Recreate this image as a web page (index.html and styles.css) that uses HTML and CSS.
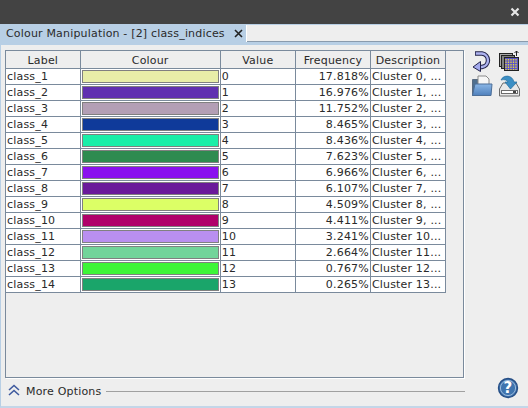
FILE: index.html
```html
<!DOCTYPE html>
<html lang="en">
<head>
    <meta charset="UTF-8">
    <title>Colour Manipulation</title>
    <link rel="stylesheet" href="styles.css">
</head>
<body>

<div class="titlebar">
    <svg class="close-icon" width="10" height="10" viewBox="0 0 10 10"><path d="M1.5 1.5 L8.5 8.5 M8.5 1.5 L1.5 8.5" stroke="#e6e6e6" stroke-width="2.2"/></svg>
</div>

<div class="dialog">
    <div class="tabstrip">
        <div class="tab">
            <span class="tab-title">Colour Manipulation - [2] class_indices</span>
            <svg width="9" height="9" viewBox="0 0 9 9"><path d="M1 1 L8 8 M8 1 L1 8" stroke="#222" stroke-width="1.6"/></svg>
        </div>
    </div>

    <div class="main">
        <div class="table-panel">
            <table class="colour-table">
                <colgroup>
                    <col class="col-label"><col class="col-colour"><col class="col-value"><col class="col-freq"><col class="col-desc">
                </colgroup>
                <thead>
                    <tr><th>Label</th><th>Colour</th><th>Value</th><th>Frequency</th><th>Description</th></tr>
                </thead>
                <tbody id="rows"></tbody>
            </table>
        </div>

        <div class="side-tools">
            <svg width="22" height="22" viewBox="0 0 22 22">
                <path d="M4 3.5 H11 A6.8 6.8 0 0 1 11 17 H9" fill="none" stroke="#23234a" stroke-width="4.4"/>
                <path d="M4.8 3.5 H11 A6.8 6.8 0 0 1 11 17 H9" fill="none" stroke="#aeb3f0" stroke-width="2.4"/>
                <path d="M9.5 11.5 L2 17 L9.5 21.5 Z" fill="#a4aaee" stroke="#23234a"/>
            </svg>
            <svg width="22" height="22" viewBox="0 0 22 22">
                <rect x="1.5" y="3.5" width="13" height="13" fill="#a8a8a8" stroke="#222"/>
                <rect x="3.5" y="5.5" width="13" height="13" fill="#808080" stroke="#222"/>
                <rect x="6.5" y="7.5" width="14" height="13" fill="#5b55c8" stroke="#222"/>
                <path d="M8 9 V20 M10.5 9 V20 M13 9 V20 M15.500 9 V20 M18 9 V20" stroke="#e6d83c" stroke-width="1.3" stroke-dasharray="1.500 1"/>
                <path d="M18.500 6 V1 M16.500 3 L18.500 1 L20.500 3" fill="none" stroke="#222"/>
            </svg>
            <svg width="22" height="22" viewBox="0 0 22 22">
                <defs>
                    <linearGradient id="folderFront" x1="0" y1="0" x2="0" y2="1">
                        <stop offset="0" stop-color="#8ab6e6"/>
                        <stop offset="1" stop-color="#4f80bc"/>
                    </linearGradient>
                </defs>
                <path d="M1.500 4.500 H7 V20.500 H1.500 Z" fill="#50708f" stroke="#5a6c82"/>
                <path d="M7 1 H15 L18 4 V10 H7 Z" fill="#f6f6f6" stroke="#8a8a8a"/>
                <path d="M4 9 H21 L20 20.500 H1.500 Z" fill="url(#folderFront)" stroke="#4d6f98"/>
            </svg>
            <svg width="23" height="22" viewBox="0 0 23 22">
                <path d="M5 8 L1.500 14 V21 H21.500 V14 L18 8 Z" fill="#e8e8e8" stroke="#6d6d6d"/>
                <rect x="3.500" y="15.500" width="16" height="3" fill="#fff" stroke="#6d6d6d"/>
                <rect x="15" y="16" width="3" height="2" fill="#444"/>
                <path d="M3 5 C5 0 14 -1 16 7 H19 L12.500 14 L7 7 H10 C9.500 5 6 4 3 5 Z" fill="#3c8fc4" stroke="#1f6a9c" stroke-width="0.7"/>
            </svg>
        </div>
    </div>

    <div class="footer">
        <svg class="more-icon" width="14" height="12" viewBox="0 0 14 12"><path d="M2 6 L7 1.5 L12 6 M2 11 L7 6.5 L12 11" fill="none" stroke="#3f5a9e" stroke-width="1.6"/></svg>
        <span class="more-label">More Options</span>
        <div class="footer-rule"></div>
        <svg class="help-icon" width="22" height="22" viewBox="0 0 22 22">
            <circle cx="11" cy="11" r="9.5" fill="#3f74ae" stroke="#274f86" stroke-width="1.4"/>
            <circle cx="11" cy="11" r="7.6" fill="none" stroke="#9dbbdc" stroke-width="1"/>
            <text x="11" y="16" class="help-mark">?</text>
        </svg>
    </div>
</div>

<script>
    const colours = ['#e8eea8', '#6030b0', '#b39fb5', '#0f3a9a', '#1aeea8', '#2e8b50', '#8a10ee',
        '#6a1a9a', '#dcff66', '#b0006a', '#b98ff0', '#72d49a', '#3df538', '#1aa56a'];
    const freqs = ['17.818', '16.976', '11.752', '8.465', '8.436', '7.623', '6.966',
        '6.107', '4.509', '4.411', '3.241', '2.664', '0.767', '0.265'];

    let html = '';
    colours.forEach(function (colour, i) {
        const desc = i < 10 ? 'Cluster ' + i + ', ...' : 'Cluster ' + i + '...';
        html += '<tr><td>class_' + (i + 1) + '</td>'
            + '<td class="swatch-cell"><div class="swatch" style="background:' + colour + '"></div></td>'
            + '<td>' + i + '</td>'
            + '<td class="num">' + freqs[i] + '%</td>'
            + '<td>' + desc + '</td></tr>';
    });
    document.getElementById('rows').innerHTML = html;
</script>

</body>
</html>
```

FILE: styles.css
```css
html, body {
    margin: 0;
    height: 100%;
}
body {
    width: 528px;
    height: 408px;
    overflow: hidden;
    display: flex;
    flex-direction: column;
    font-family: "DejaVu Sans", sans-serif;
    font-size: 11px;
    letter-spacing: 0.18px;
    color: #2a2a2a;
    background: #eeeeee;
}
.titlebar {
    height: 24px;
    flex: none;
    display: flex;
    justify-content: flex-end;
    align-items: center;
    padding-right: 8px;
    background: #434343;
}
.dialog {
    flex: 1;
    display: flex;
    flex-direction: column;
    min-height: 0;
    border-top: 1px solid #b8cfe5;
    border-left: 1px solid #b8cfe5;
    border-bottom: 2px solid #c4d6e8;
}
.tabstrip {
    height: 16px;
    flex: none;
    border-bottom: 1px solid #8a9bad;
    display: flex;
}
.tab {
    width: 246px;
    margin-bottom: -1px;
    display: flex;
    align-items: center;
    justify-content: space-between;
    padding: 0 3px 0 5px;
    box-sizing: border-box;
    background: #b8cfe5;
    border-right: 1px solid #ffffff;
    white-space: nowrap;
}
.main {
    flex: 1;
    min-height: 0;
    display: flex;
    border-top: 3px solid #b8cfe5;
}
.table-panel {
    width: 459px;
    height: 328px;
    margin: 5px 0 0 4px;
    flex: none;
    box-sizing: border-box;
    border: 1px solid #7a8a9c;
    box-shadow: 1px 1px 0 #ffffff;
}
.colour-table {
    width: 440px;
    table-layout: fixed;
    border-collapse: collapse;
    border-bottom: 1px solid #7a8a9c;
    border-right: 1px solid #7a8a9c;
}
.col-label { width: 74px; }
.col-colour { width: 140px; }
.col-value { width: 75px; }
.col-freq { width: 75px; }
.col-desc { width: 75px; }
.colour-table th {
    height: 17px;
    padding: 2px 0 0 0;
    box-sizing: border-box;
    font-weight: normal;
    text-align: center;
    background: #eeeeee;
    border-right: 1px solid #7a8a9c;
    border-bottom: 1px solid #7a8a9c;
}
.colour-table td {
    height: 15px;
    padding: 0 0 0 1px;
    background: #ffffff;
    border-right: 1px solid #7a8a9c;
    border-bottom: 1px solid #7a8a9c;
    white-space: nowrap;
    overflow: hidden;
}
.colour-table td.num {
    text-align: right;
    padding: 0 1px 0 0;
}
.colour-table td.swatch-cell {
    padding: 0;
}
.swatch {
    height: 11px;
    margin: 1px;
    border: 1px solid #808080;
}
.side-tools {
    width: 52px;
    margin: 5px 0 0 7px;
    display: grid;
    grid-template-columns: 22px 23px;
    grid-auto-rows: 22px;
    gap: 3px 5px;
    align-content: start;
}
.footer {
    height: 30px;
    flex: none;
    display: flex;
    align-items: center;
    padding-left: 6px;
}
.more-icon {
    margin-top: -3px;
}
.more-label {
    margin-left: 5px;
    margin-top: 1px;
    white-space: nowrap;
}
.footer-rule {
    width: 359px;
    margin-left: 5px;
    height: 1px;
    background: #a0a0a0;
}
.help-icon {
    margin-left: 32px;
    margin-top: -6px;
}
.help-mark {
    font-family: "DejaVu Sans", sans-serif;
    font-size: 15px;
    font-weight: bold;
    fill: #ffffff;
    text-anchor: middle;
}
```
